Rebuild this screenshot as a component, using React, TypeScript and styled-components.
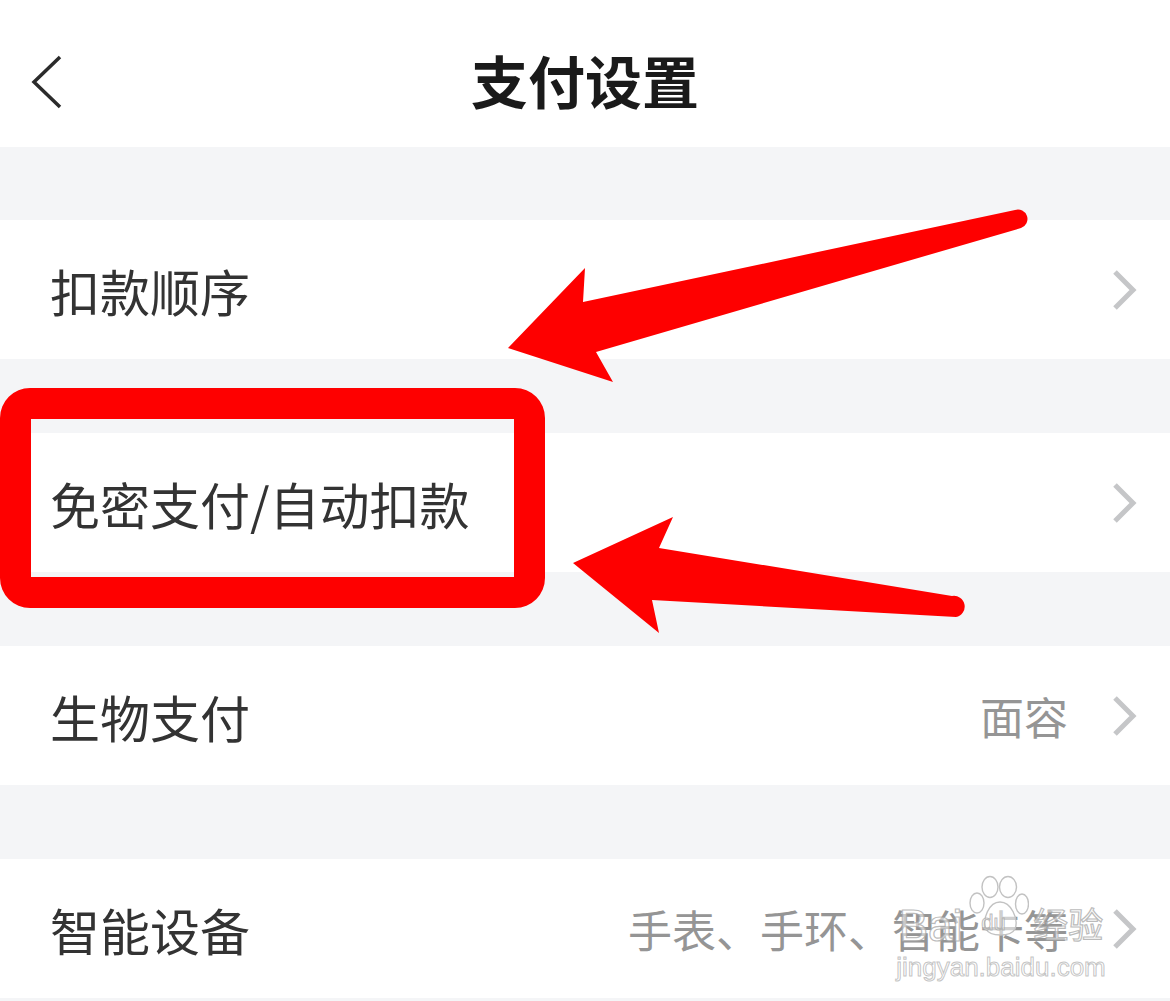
import React from 'react'
import styled, { createGlobalStyle } from 'styled-components'

const GlobalStyle = createGlobalStyle`
  html, body {
    margin: 0;
    padding: 0;
    background: #f4f5f7;
  }
  body {
    font-family: "Noto Sans CJK SC", "Noto Sans", sans-serif;
    color: #333;
  }
`

type Item = { label: string; value?: string }

const items: Item[] = [
  { label: '扣款顺序' },
  { label: '免密支付/自动扣款' },
  { label: '生物支付', value: '面容' },
  { label: '智能设备', value: '手表、手环、智能卡等' },
]

const Chevron = ({ dir = 'right' }: { dir?: 'left' | 'right' }) =>
  dir === 'left' ? (
    <svg width="34" height="54" viewBox="0 0 34 54">
      <path d="M29 2 L3 27 L29 52" fill="none" stroke="#2b2b2b" strokeWidth="3.5" />
    </svg>
  ) : (
    <svg width="26" height="40" viewBox="0 0 26 40">
      <path d="M3 2 L21 20 L3 38" fill="none" stroke="#c5c6c8" strokeWidth="5" />
    </svg>
  )

// 百度经验水印的爪印
const Paw = () => (
  <svg width="60" height="62" viewBox="0 0 60 62">
    <g fill="rgba(255,255,255,0.55)" stroke="#c2c2c2" strokeWidth="1.4">
      <ellipse cx="21" cy="12" rx="8" ry="10.5" />
      <ellipse cx="39" cy="12" rx="8.5" ry="10.5" />
      <ellipse cx="8" cy="28" rx="7" ry="10" />
      <ellipse cx="53" cy="29" rx="6.5" ry="10" />
      <path d="M31 27 C20 27 13 44 17 54 C21 62 42 62 46 54 C50 44 42 27 31 27 Z" />
    </g>
  </svg>
)

export default function App() {
  return (
    <>
      <GlobalStyle />
      <Page>
        <Header>
          <BackButton>
            <Chevron dir="left" />
          </BackButton>
          <Title>支付设置</Title>
        </Header>

        <List>
          {items.map((item) => (
            <Row key={item.label}>
              <Label>{item.label}</Label>
              {item.value && <Value>{item.value}</Value>}
              <Chevron />
            </Row>
          ))}
        </List>

        {/* 标注层 */}
        <Annotations viewBox="0 0 1170 1001">
          <path
            d="M508 348 L585 268 L583 302 L1015 210 A9 9 0 0 1 1021 228 L596 352 L613 382 Z"
            fill="#fe0000"
          />
          <path
            d="M573 563 L673 517 L659 548 L952 596 A10.5 10.5 0 0 1 956 617 L652 600 L659 633 Z"
            fill="#fe0000"
          />
        </Annotations>
        <Highlight />

        <Watermark>
          <WmTop>
            <WmText>Bai</WmText>
            <PawWrap>
              <Paw />
              <WmSmall>du</WmSmall>
            </PawWrap>
            <WmCjk>经验</WmCjk>
          </WmTop>
          <WmUrl>jingyan.baidu.com</WmUrl>
        </Watermark>
      </Page>
    </>
  )
}

const Page = styled.div`
  position: relative;
  width: 1170px;
  min-height: 1001px;
  overflow: hidden;
  background: #f4f5f7;
`

const Header = styled.header`
  height: 147px;
  background: #fff;
  display: flex;
  align-items: center;
  justify-content: center;
  position: relative;
  padding-top: 12px;
  box-sizing: border-box;
`

const BackButton = styled.div`
  position: absolute;
  left: 31px;
  top: 55px;
  display: flex;
`

const Title = styled.h1`
  margin: 0;
  font-size: 57px;
  font-weight: 700;
  color: #1a1a1a;
  line-height: 1;
`

const List = styled.div`
  display: flex;
  flex-direction: column;
  gap: 74px;
  padding-top: 73px;
  padding-bottom: 3px;
`

const Row = styled.div`
  height: 139px;
  background: #fff;
  display: flex;
  align-items: center;
  padding: 0 32px 0 50px;
  box-sizing: border-box;
`

const Label = styled.span`
  flex: 1;
  font-size: 50px;
  line-height: 1;
  color: #333;
`

const Value = styled.span`
  font-size: 44px;
  line-height: 1;
  color: #959595;
  margin-right: 44px;
`

const Annotations = styled.svg`
  position: absolute;
  left: 0;
  top: 0;
  width: 1170px;
  height: 1001px;
  pointer-events: none;
`

const Highlight = styled.div`
  position: absolute;
  left: 0;
  top: 388px;
  width: 545px;
  height: 220px;
  box-sizing: border-box;
  border: 31px solid #fe0000;
  border-radius: 30px;
  pointer-events: none;
`

const Watermark = styled.div`
  position: absolute;
  left: 895px;
  top: 875px;
  width: 212px;
  display: flex;
  flex-direction: column;
  align-items: center;
  pointer-events: none;
  font-family: "Liberation Sans", "Noto Sans CJK SC", sans-serif;
`

const WmTop = styled.div`
  display: flex;
  align-items: flex-end;
  height: 62px;
`

const outline = `
  color: rgba(255, 255, 255, 0.5);
  -webkit-text-stroke: 1.2px rgba(165, 165, 165, 0.75);
`

const WmText = styled.span`
  font-size: 44px;
  line-height: 1;
  margin-bottom: -11px;
  margin-right: 7px;
  ${outline}
`

const WmCjk = styled.span`
  font-family: "Noto Sans CJK SC", sans-serif;
  font-size: 35px;
  line-height: 1;
  margin-left: 4px;
  margin-bottom: -3px;
  ${outline}
`

const PawWrap = styled.span`
  position: relative;
  width: 60px;
  height: 62px;
  display: flex;
  justify-content: center;
`

const WmSmall = styled.span`
  position: absolute;
  left: 12px;
  bottom: 3px;
  font-size: 22px;
  line-height: 1;
  ${outline}
  -webkit-text-stroke: 1px rgba(165, 165, 165, 0.75);
`

const WmUrl = styled.span`
  margin-top: 17px;
  font-size: 26px;
  line-height: 1;
  ${outline}
  -webkit-text-stroke: 1px rgba(170, 170, 170, 0.7);
`
